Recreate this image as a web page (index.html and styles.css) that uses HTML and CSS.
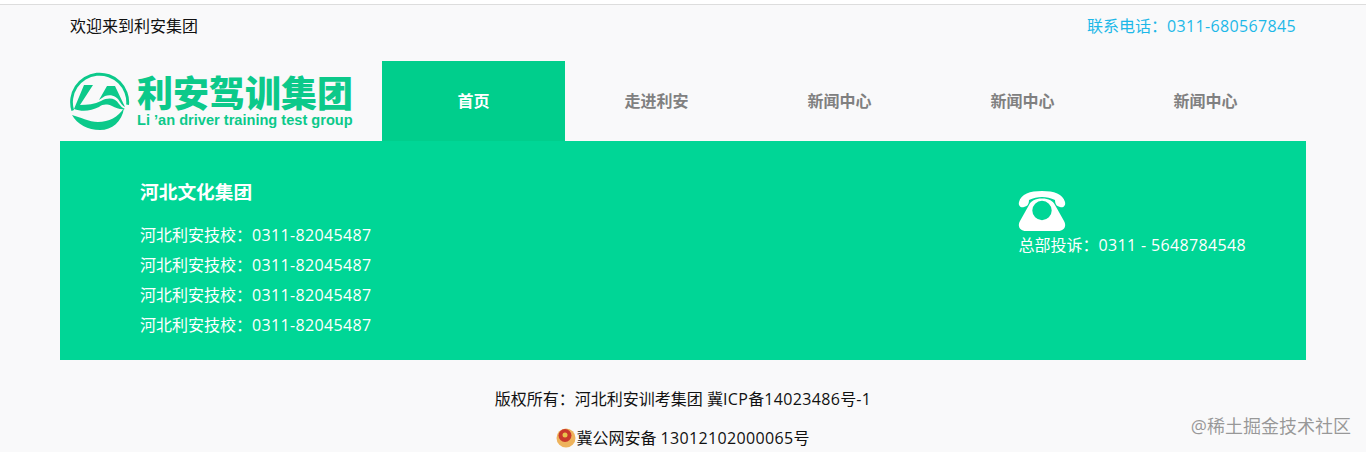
FILE: index.html
```html
<!DOCTYPE html>
<html lang="zh-CN">
<head>
  <meta charset="UTF-8">
  <title>利安驾训集团</title>
  <link rel="stylesheet" href="styles.css">
</head>
<body>
  <!-- 顶部 -->
  <div class="topbar">
    <span class="welcome">欢迎来到利安集团</span>
    <span class="hotline">联系电话：<span class="num">0311-680567845</span></span>
  </div>

  <!-- 导航 -->
  <div class="header">
    <div class="logo">
      <svg class="logo-mark" viewBox="0 0 62 62" width="62" height="62">
        <path d="M2.500 41A29.500 29.500 0 1 1 60 35l-2.800-.5A26.700 26.700 0 1 0 5 40z" fill="#0cc98a"/>
        <path d="M3 45c8 2 17 7 26 7 11 0 20-5 26-14C53 52 43 60 31 60 19 60 8 54 3 45z" fill="#0cc98a"/>
        <path d="M15 15h9L11 35c7 0 15-1 21-4 8-4 14-3 18 3 2 2 3 4 6 5-4 1-9-1-13-3-5-2-9-2-13 1-8 4-17 5-25 2z" fill="#0cc98a"/>
        <path d="M38 16h8l10 21c-2-1-3-2-5-5-3-6-9-8-15-6l-6 4z" fill="#0cc98a"/>
      </svg>
      <div class="logo-words">
        <div class="logo-cn">利安驾训集团</div>
        <div class="logo-en">Li ’an driver training test group</div>
      </div>
    </div>
    <ul class="nav">
      <li class="nav-item active">首页</li>
      <li class="nav-item">走进利安</li>
      <li class="nav-item">新闻中心</li>
      <li class="nav-item">新闻中心</li>
      <li class="nav-item">新闻中心</li>
    </ul>
  </div>

  <!-- 联系方式 -->
  <div class="contact">
    <div class="schools">
      <h3 class="schools-title">河北文化集团</h3>
      <p>河北利安技校：<span class="num">0311-82045487</span></p>
      <p>河北利安技校：<span class="num">0311-82045487</span></p>
      <p>河北利安技校：<span class="num">0311-82045487</span></p>
      <p>河北利安技校：<span class="num">0311-82045487</span></p>
    </div>
    <div class="complaint">
      <svg class="phone-icon" viewBox="0 0 48 42" width="48" height="42">
        <path d="M1 12C3 4 12 1 24 1s21 3 23 11c1 4-2 6-5 5l-2-.7c-2-.8-3-3-3-6.300C33 8 28 7 24 7s-9 1-13 3c0 3.300-1 5.500-3 6.300L6 17c-3 1-6-1-5-5z" fill="#fff"/>
        <path fill-rule="evenodd" d="M24 8.500c7 0 11 2.500 13 6.500l9 16c3 5 0 10-6 10H8c-6 0-9-5-6-10l9-16c2-4 6-6.500 13-6.500zM24 10.800a9.700 9.700 0 1 0 0 19.400 9.700 9.700 0 0 0 0-19.400z" fill="#fff"/>
      </svg>
      <p>总部投诉：<span class="num">0311 - 5648784548</span></p>
    </div>
  </div>

  <!-- 底部 -->
  <div class="footer">
    <p>版权所有：河北利安训考集团 冀<span class="num">ICP</span>备<span class="num">14023486</span>号<span class="num">-1</span></p>
    <p class="beian">
      <svg class="badge" viewBox="0 0 20 20" width="20" height="20">
        <circle cx="10" cy="10" r="9.500" fill="#eeb35c"/>
        <circle cx="9" cy="7.500" r="6.500" fill="#c9392c"/>
        <circle cx="9" cy="7" r="2.500" fill="#e8c34c"/>
      </svg>冀公网安备 <span class="num">13012102000065</span>号
    </p>
  </div>

  <div class="watermark">@稀土掘金技术社区</div>
</body>
</html>
```

FILE: styles.css
```css
* {
  box-sizing: border-box;
}

html,
body {
  height: 452px;
  overflow: hidden;
}

html {
  background: #fff;
}

body {
  margin: 0;
  padding: 0 60px;
  position: relative;
  font-family: "Open Sans", "Noto Sans CJK SC", sans-serif;
  font-size: 16px;
  color: #111;
  background: #f9f9fa;
  border-top: 1px solid #ddd;
  margin-top: 4px;
}

p {
  margin: 0;
}

.num {
  letter-spacing: 0.35px;
}

.topbar {
  height: 45px;
  padding: 0 10px 5px;
  display: flex;
  justify-content: space-between;
  align-items: center;
}

.hotline {
  color: #1db8e8;
}

.header {
  height: 91px;
  padding-top: 11px;
  display: flex;
}

.logo {
  width: 322px;
  padding: 9px 0 0 9px;
  display: flex;
}

.logo-mark {
  flex: none;
}

.logo-words {
  margin-left: 6px;
  margin-top: 2px;
}

.logo-cn {
  font-family: "Noto Sans CJK SC", sans-serif;
  font-size: 36px;
  line-height: 38px;
  font-weight: 900;
  color: #0cc98a;
  white-space: nowrap;
}

.logo-en {
  margin-top: 2px;
  font-family: "Liberation Sans", sans-serif;
  font-size: 14.600px;
  line-height: 16px;
  font-weight: 700;
  color: #0cc98a;
  white-space: nowrap;
}

.nav {
  list-style: none;
  margin: 0;
  padding: 0;
  display: flex;
}

.nav-item {
  width: 183px;
  padding-bottom: 2px;
  display: flex;
  align-items: center;
  justify-content: center;
  font-weight: 700;
  color: #808080;
}

.nav-item.active {
  color: #fff;
  background: #00ce8c;
}

.contact {
  height: 219px;
  padding: 36px 60px 0 80px;
  display: flex;
  justify-content: space-between;
  color: #fff;
  background: #00d696;
}

.schools p {
  line-height: 30px;
}

.schools-title {
  margin: 0 0 13px;
  font-size: 18.720px;
  line-height: 30px;
  font-weight: 700;
}

.complaint {
  padding-top: 13px;
}

.complaint p {
  line-height: 26px;
}

.phone-icon {
  display: block;
}

.footer {
  padding-top: 26px;
  text-align: center;
  color: #111;
}

.footer p {
  line-height: 26px;
}

.footer .beian {
  margin-top: 13px;
}

.badge {
  vertical-align: -4px;
}

.watermark {
  position: absolute;
  right: 15px;
  top: 409px;
  font-size: 18px;
  line-height: 24px;
  color: rgba(120, 120, 120, 0.75);
}
```
